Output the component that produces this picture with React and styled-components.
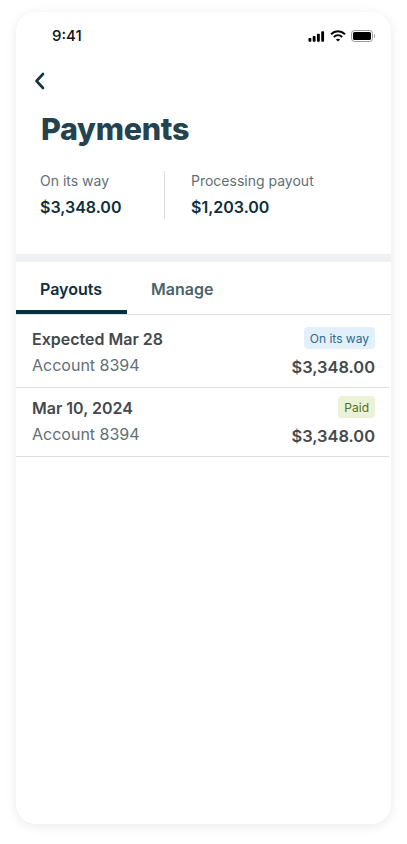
import React from 'react';
import styled, { createGlobalStyle } from 'styled-components';

const GlobalStyle = createGlobalStyle`
  html, body {
    margin: 0;
    padding: 0;
    background: #fff;
    font-family: 'Inter', 'Liberation Sans', sans-serif;
  }
`;

const Page = styled.div`
  width: 407px;
  height: 844px;
  box-sizing: border-box;
  padding: 12px 16px 20px;
  overflow: hidden;
`;

const Phone = styled.div`
  height: 812px;
  background: #fff;
  border-radius: 20px;
  box-shadow: 0 2px 12px rgba(0, 0, 0, 0.09);
  overflow: hidden;
`;

const StatusBar = styled.div`
  height: 47px;
  box-sizing: border-box;
  padding: 0 16px 0 36px;
  display: flex;
  align-items: center;
  justify-content: space-between;
`;

const Time = styled.span`
  font-size: 15px;
  font-weight: 500;
  color: #111;
`;

const StatusIcons = styled.div`
  display: flex;
  align-items: center;
  gap: 5px;
`;

const Header = styled.div`
  height: 195px;
  box-sizing: border-box;
  padding: 10px 0 0 24px;
`;

const BackButton = styled.div`
  height: 24px;
  margin-left: -12px;
  display: flex;
  align-items: center;
`;

const Title = styled.h1`
  margin: 15px 0 0 1px;
  font-size: 30.5px;
  line-height: 42px;
  font-weight: 800;
  letter-spacing: -0.3px;
  color: #25424f;
`;

const Stats = styled.div`
  margin-top: 21px;
  display: flex;
`;

const Stat = styled.div`
  height: 48px;
  box-sizing: border-box;
  padding-bottom: 2px;
  display: flex;
  flex-direction: column;
  justify-content: space-between;
  &:first-child {
    width: 124px;
  }
  & + & {
    padding-left: 26px;
    border-left: 1px solid #dcdfe0;
  }
`;

const StatLabel = styled.span`
  font-size: 14px;
  line-height: 20px;
  color: #5f7077;
`;

const StatValue = styled.span`
  font-size: 16px;
  line-height: 20px;
  font-weight: 600;
  color: #0e2f3c;
`;

const Divider = styled.div`
  height: 8px;
  background: #f0f1f2;
`;

const Tabs = styled.div`
  height: 53px;
  display: flex;
  box-sizing: border-box;
  border-bottom: 1px solid #dcdfe1;
`;

const Tab = styled.div`
  width: ${(props) => props.$width}px;
  height: 52px;
  box-sizing: border-box;
  padding: 6px 24px 0;
  display: flex;
  align-items: center;
  font-size: 16px;
  font-weight: 600;
  color: ${(props) => (props.$active ? '#0e2f3c' : '#4b636d')};
  border-bottom: 4px solid ${(props) => (props.$active ? '#06303f' : 'transparent')};
`;

const List = styled.div`
  padding-top: 4px;
`;

const Row = styled.div`
  height: 69px;
  box-sizing: border-box;
  margin-right: 2px;
  padding: 8px 14px 0 16px;
  border-bottom: 1px solid #dcdee0;
  display: grid;
  grid-template-columns: 1fr auto;
  grid-template-rows: 24px 20px;
  row-gap: 4px;
  align-items: center;
`;

const RowTitle = styled.span`
  font-size: 16px;
  line-height: 20px;
  font-weight: 600;
  color: #44494d;
`;

const Account = styled.span`
  font-size: 16px;
  line-height: 20px;
  color: #5f7077;
`;

const Amount = styled.span`
  margin-top: 4px;
  font-size: 16.4px;
  line-height: 20px;
  font-weight: 600;
  color: #44494d;
  justify-self: end;
`;

const Badge = styled.span`
  justify-self: end;
  align-self: start;
  height: 22px;
  padding: 0 6px;
  display: flex;
  align-items: center;
  border-radius: 4px;
  font-size: 12px;
  background: ${(props) => (props.$tone === 'paid' ? '#ebf2d8' : '#e2f0fa')};
  color: ${(props) => (props.$tone === 'paid' ? '#55701f' : '#2b6a94')};
`;

const payouts = [
  { title: 'Expected Mar 28', badge: 'On its way', tone: 'info' },
  { title: 'Mar 10, 2024', badge: 'Paid', tone: 'paid' },
];

export default function App() {
  return (
    <Page>
      <GlobalStyle />
      <Phone>
        <StatusBar>
          <Time>9:41</Time>
          <StatusIcons>
            <svg width="17" height="12" viewBox="0 0 18 12" fill="#000">
              <rect x="0.5" y="8" width="3" height="4" rx="0.8" />
              <rect x="5" y="6" width="3" height="6" rx="0.8" />
              <rect x="9.5" y="3.5" width="3" height="8.5" rx="0.8" />
              <rect x="14" y="1" width="3" height="11" rx="0.8" />
            </svg>
            <svg width="16" height="12" viewBox="0 0 16 12" fill="none" stroke="#000">
              <path d="M1 4.2C5 .4 11 .4 15 4.2" strokeWidth="2" />
              <path d="M3.8 7C6.2 4.8 9.8 4.8 12.2 7" strokeWidth="2" />
              <path d="M8 11.6 5.9 9.4C7.1 8.4 8.9 8.4 10.1 9.4Z" fill="#000" stroke="none" />
            </svg>
            <svg width="24" height="12" viewBox="0 0 24 12" fill="none">
              <rect x="0.5" y="0.5" width="21" height="11" rx="3" stroke="#9a9a9a" />
              <rect x="2" y="2" width="18" height="8" rx="1.6" fill="#000" />
              <path d="M23 4v4c.8-.3 1-1.2 1-2s-.2-1.700-1-2Z" fill="#9a9a9a" />
            </svg>
          </StatusIcons>
        </StatusBar>
        <Header>
          <BackButton>
            <svg width="24" height="24" viewBox="0 0 24 24" fill="none" stroke="#0e3446" strokeWidth="2.6" strokeLinecap="round" strokeLinejoin="round">
              <path d="M15 5l-6.500 7 6.500 7" />
            </svg>
          </BackButton>
          <Title>Payments</Title>
          <Stats>
            <Stat>
              <StatLabel>On its way</StatLabel>
              <StatValue>$3,348.00</StatValue>
            </Stat>
            <Stat>
              <StatLabel>Processing payout</StatLabel>
              <StatValue>$1,203.00</StatValue>
            </Stat>
          </Stats>
        </Header>
        <Divider />
        <Tabs>
          <Tab $active $width={111}>Payouts</Tab>
          <Tab $width={120}>Manage</Tab>
        </Tabs>
        <List>
          {payouts.map((p) => (
            <Row key={p.title}>
              <RowTitle>{p.title}</RowTitle>
              <Badge $tone={p.tone}>{p.badge}</Badge>
              <Account>Account 8394</Account>
              <Amount>$3,348.00</Amount>
            </Row>
          ))}
        </List>
      </Phone>
    </Page>
  );
}
